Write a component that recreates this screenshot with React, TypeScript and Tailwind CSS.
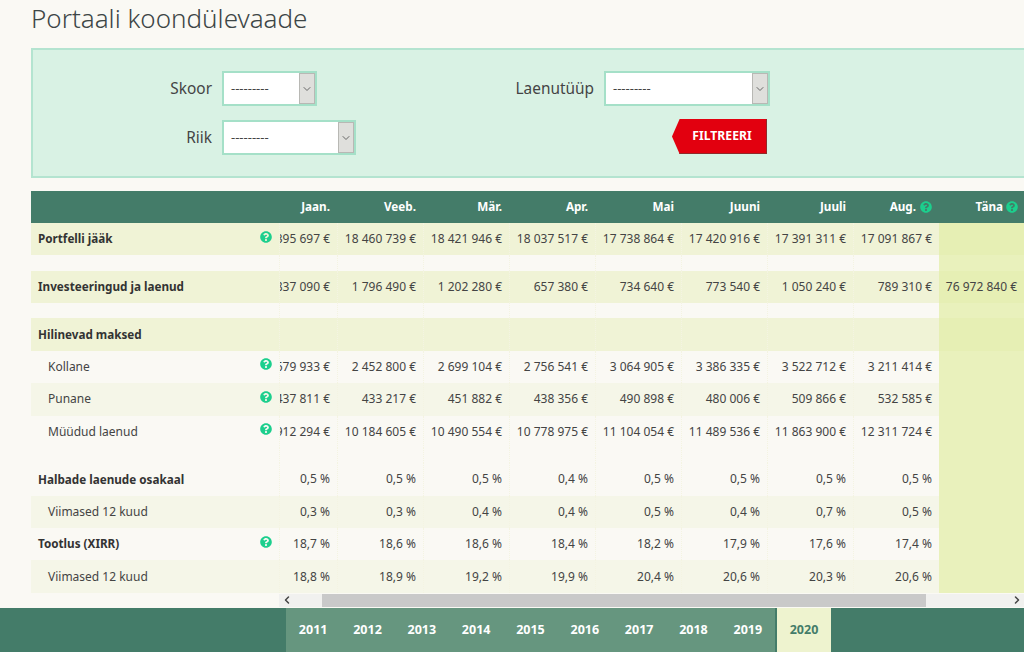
import { ChevronDown, ChevronLeft, ChevronRight } from 'lucide-react';
import { FaQuestionCircle } from 'react-icons/fa';

const months = ['Jaan.', 'Veeb.', 'Mär.', 'Apr.', 'Mai', 'Juuni', 'Juuli', 'Aug.'];
const years = ['2011', '2012', '2013', '2014', '2015', '2016', '2017', '2018', '2019'];

type Row = {
    label?: string;
    values?: string[];
    today?: string;
    bold?: boolean;
    sub?: boolean;
    help?: boolean;
    tone: 'strong' | 'soft' | 'plain' | 'gap';
};

const rows: Row[] = [
    { label: 'Portfelli jääk', bold: true, help: true, tone: 'strong', values: ['18 395 697 €', '18 460 739 €', '18 421 946 €', '18 037 517 €', '17 738 864 €', '17 420 916 €', '17 391 311 €', '17 091 867 €'] },
    { tone: 'gap' },
    { label: 'Investeeringud ja laenud', bold: true, tone: 'strong', today: '76 972 840 €', values: ['1 837 090 €', '1 796 490 €', '1 202 280 €', '657 380 €', '734 640 €', '773 540 €', '1 050 240 €', '789 310 €'] },
    { tone: 'gap' },
    { label: 'Hilinevad maksed', bold: true, tone: 'strong' },
    { label: 'Kollane', sub: true, help: true, tone: 'plain', values: ['2 679 933 €', '2 452 800 €', '2 699 104 €', '2 756 541 €', '3 064 905 €', '3 386 335 €', '3 522 712 €', '3 211 414 €'] },
    { label: 'Punane', sub: true, help: true, tone: 'soft', values: ['437 811 €', '433 217 €', '451 882 €', '438 356 €', '490 898 €', '480 006 €', '509 866 €', '532 585 €'] },
    { label: 'Müüdud laenud', sub: true, help: true, tone: 'plain', values: ['9 912 294 €', '10 184 605 €', '10 490 554 €', '10 778 975 €', '11 104 054 €', '11 489 536 €', '11 863 900 €', '12 311 724 €'] },
    { tone: 'gap' },
    { label: 'Halbade laenude osakaal', bold: true, tone: 'plain', values: ['0,5 %', '0,5 %', '0,5 %', '0,4 %', '0,5 %', '0,5 %', '0,5 %', '0,5 %'] },
    { label: 'Viimased 12 kuud', sub: true, tone: 'soft', values: ['0,3 %', '0,3 %', '0,4 %', '0,4 %', '0,5 %', '0,4 %', '0,7 %', '0,5 %'] },
    { label: 'Tootlus (XIRR)', bold: true, help: true, tone: 'plain', values: ['18,7 %', '18,6 %', '18,6 %', '18,4 %', '18,2 %', '17,9 %', '17,6 %', '17,4 %'] },
    { label: 'Viimased 12 kuud', sub: true, tone: 'soft', values: ['18,8 %', '18,9 %', '19,2 %', '19,9 %', '20,4 %', '20,6 %', '20,3 %', '20,6 %'] },
];

function Help({ className }: { className?: string }) {
    return <FaQuestionCircle className={`text-[#1ccf8d] w-[12px] h-[12px] shrink-0 ${className ?? ''}`} />;
}

function Select({ width }: { width: string }) {
    return (
        <div className={`${width} h-[35px] flex border-2 border-[#a5e0c8] bg-white`}>
            <span className="flex-1 pl-[7px] flex items-center text-[13px] text-[#444]">---------</span>
            <span className="w-[16px] flex items-center justify-center bg-[#dfdfdc] border border-[#b8b8b4]">
                <ChevronDown className="w-3 h-3 text-[#666]" strokeWidth={2} />
            </span>
        </div>
    );
}

function TableRow({ row }: { row: Row }) {
    const bg = { strong: 'bg-[#f0f3d6]', soft: 'bg-[#f5f6e8]', plain: 'bg-[#faf9f4]', gap: 'bg-[#faf9f4]' }[row.tone];
    const todayBg = row.tone === 'strong' ? 'bg-[#e6efb4]' : 'bg-[#e9f1bc]';
    const height = row.tone === 'gap' ? 'h-[15.3px]' : 'h-[32.4px]';
    const values = row.values ?? Array(8).fill('');

    return (
        <div className={`flex ${height} ${bg}`}>
            <div className="w-[248px] shrink-0 flex items-center justify-between pr-[7px]">
                <span className={`${row.sub ? 'pl-[17px]' : 'pl-[7px]'} ${row.bold ? 'font-bold text-[11.7px] text-[#333]' : 'text-[#444]'} whitespace-nowrap`}>
                    {row.label}
                </span>
                {row.help && <Help className="mb-[5px]" />}
            </div>
            {values.map((v: string, i: number) => (
                <div
                    key={i}
                    className={`${i === 0 ? 'w-[58px]' : 'w-[86px]'} shrink-0 flex items-center justify-end overflow-hidden whitespace-nowrap pr-[7px] border-l border-dotted border-[#f4f4e2] text-[#444]`}
                >
                    {v}
                </div>
            ))}
            <div className={`w-[85px] shrink-0 flex items-center justify-end whitespace-nowrap pr-[7px] text-[#444] ${todayBg}`}>
                {row.today}
            </div>
        </div>
    );
}

export default function App() {
    return (
        <div className="w-[1024px] h-[652px] overflow-hidden flex flex-col bg-[#faf9f4] text-[12px] text-[#444] font-['Noto_Sans','Liberation_Sans',sans-serif]">
            <h1 className="h-[48px] shrink-0 pl-[31px] text-[26px] font-light leading-[36px] text-[#3d4646]">Portaali koondülevaade</h1>

            <div className="ml-[31px] h-[130px] shrink-0 border-2 border-r-0 border-[#b4e4d0] bg-[#d9f2e4] flex pt-[21px]">
                <div className="w-[472px] shrink-0 flex flex-col gap-[14px]">
                    <div className="flex items-center">
                        <label className="w-[179px] text-right text-[15.4px] text-[#444]">Skoor</label>
                        <div className="ml-[10px]"><Select width="w-[95px]" /></div>
                    </div>
                    <div className="flex items-center">
                        <label className="w-[179px] text-right text-[15.4px] text-[#444]">Riik</label>
                        <div className="ml-[10px]"><Select width="w-[134px]" /></div>
                    </div>
                </div>
                <div className="flex flex-col gap-[14px]">
                    <div className="flex items-center">
                        <label className="w-[89px] text-right text-[15.4px] text-[#444]">Laenutüüp</label>
                        <div className="ml-[10px]"><Select width="w-[166px]" /></div>
                    </div>
                    <div className="flex justify-end pr-[3px] -mt-px">
                        <button className="w-[95px] h-[35px] pl-[6px] bg-[#e2000f] border-b border-r border-[#8f2a2a] text-white text-[12.2px] font-bold [clip-path:polygon(8%_0,100%_0,100%_100%,8%_100%,0_50%)]">
                            FILTREERI
                        </button>
                    </div>
                </div>
            </div>

            <div className="ml-[31px] mt-[13px] shrink-0">
                <div className="flex h-[32px] bg-[#447c69] text-white text-[11.7px] font-bold items-center">
                    <div className="w-[248px] shrink-0" />
                    {months.map((m, i) => (
                        <div key={m} className={`${i === 0 ? 'w-[58px]' : 'w-[86px]'} shrink-0 flex items-center justify-end gap-[4px] pr-[7px]`}>
                            {m}
                            {m === 'Aug.' && <Help />}
                        </div>
                    ))}
                    <div className="w-[85px] shrink-0 flex items-center justify-end gap-[3px] pr-[6px]">
                        Täna
                        <Help />
                    </div>
                </div>
                {rows.map((row, i) => (
                    <TableRow key={i} row={row} />
                ))}
            </div>

            <div className="ml-[279px] mt-[1px] h-[13px] shrink-0 flex bg-[#f1f1ef]">
                <span className="w-[15px] flex items-center justify-center"><ChevronLeft className="w-3 h-3 text-[#444]" strokeWidth={3} /></span>
                <span className="w-[28px]" />
                <span className="w-[604px] bg-[#c9c9c9]" />
                <span className="flex-1" />
                <span className="w-[15px] flex items-center justify-center"><ChevronRight className="w-3 h-3 text-[#444]" strokeWidth={3} /></span>
            </div>

            <div className="mt-auto h-[44px] shrink-0 bg-[#447c69] flex pl-[286px] text-[12.5px] font-bold">
                <div className="w-[489px] flex bg-[#66967f] text-white">
                    {years.map((y) => (
                        <span key={y} className="flex-1 flex items-center justify-center">{y}</span>
                    ))}
                </div>
                <span className="ml-[2px] w-[54px] flex items-center justify-center bg-[#eef3cf] text-[#447c69]">2020</span>
            </div>
        </div>
    );
}
